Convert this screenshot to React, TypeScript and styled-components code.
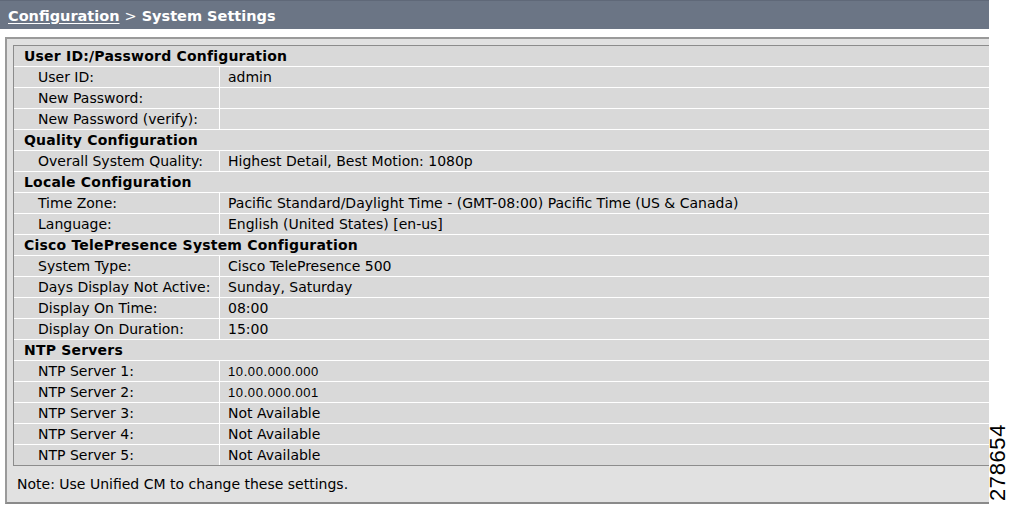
import React from "react";
import styled, { createGlobalStyle } from "styled-components";

const Global = createGlobalStyle`
  html, body { margin: 0; padding: 0; background: #ffffff; }
  body { font-family: "DejaVu Sans", Verdana, sans-serif; color: #000; }
`;

const Page = styled.div`
  display: flex;
  width: 1009px;
  height: 506px;
  overflow: hidden;
`;

const Main = styled.div`
  width: 989px;
  flex-shrink: 0;
  display: flex;
  flex-direction: column;
`;

const TitleBar = styled.div`
  height: 29px;
  background: #6b7585;
  border-top: 1px solid #5f6878;
  box-sizing: border-box;
  display: flex;
  align-items: center;
  padding: 2px 0 0 8px;
  color: #ffffff;
  font-weight: bold;
  font-size: 14.5px;
`;

const Crumb = styled.a`
  color: #ffffff;
  text-decoration: underline;
  text-underline-offset: 2px;
`;

const Sep = styled.span`
  font-weight: normal;
  margin: 0 5px;
`;

const Panel = styled.div`
  margin: 8px 0 0 5px;
  border-left: 2px solid #9a9a9a;
  border-top: 2px solid #9a9a9a;
  border-bottom: 2px solid #8a8a8a;
  background: #e1e1e1;
  padding: 6px 0 0 6px;
  display: flex;
  flex-direction: column;
`;

const Table = styled.div`
  border-left: 1px solid #8c8c8c;
  border-top: 1px solid #8c8c8c;
  border-bottom: 1px solid #8c8c8c;
  background: #ffffff;
  display: flex;
  flex-direction: column;
  gap: 1px;
`;

const Heading = styled.div`
  height: 20px;
  background: #d9d9d9;
  display: flex;
  align-items: center;
  padding-left: 10px;
  font-weight: bold;
  font-size: 14px;
  letter-spacing: 0.2px;
`;

const Row = styled.div`
  height: 20px;
  display: grid;
  grid-template-columns: 205px 1fr;
  column-gap: 1px;
  font-size: 14px;
`;

const Cell = styled.div<{ $indent: number; $ip?: boolean }>`
  background: #d9d9d9;
  display: flex;
  align-items: center;
  padding-left: ${(p) => p.$indent}px;
  white-space: nowrap;
  ${(p) =>
    p.$ip &&
    `font-family: "Liberation Sans", Arial, sans-serif; letter-spacing: 0.6px; font-size: 13px;`}
`;

const Note = styled.div`
  height: 36px;
  display: flex;
  align-items: center;
  padding-left: 4px;
  font-size: 14px;
`;

const Side = styled.div`
  width: 20px;
  box-sizing: border-box;
  display: flex;
  align-items: flex-end;
  justify-content: flex-start;
  padding: 0 0 5px 0;
`;

const FigNum = styled.div`
  writing-mode: vertical-rl;
  transform: rotate(180deg);
  font-family: "Liberation Sans", Arial, sans-serif;
  font-size: 22px;
  letter-spacing: 0.6px;
  line-height: 18px;
  width: 18px;
`;

type Item = { label: string; value: string; ip?: boolean };
type Section = { title: string; items: Item[] };

const sections: Section[] = [
  {
    title: "User ID:/Password Configuration",
    items: [
      { label: "User ID:", value: "admin" },
      { label: "New Password:", value: "" },
      { label: "New Password (verify):", value: "" },
    ],
  },
  {
    title: "Quality Configuration",
    items: [{ label: "Overall System Quality:", value: "Highest Detail, Best Motion: 1080p" }],
  },
  {
    title: "Locale Configuration",
    items: [
      { label: "Time Zone:", value: "Pacific Standard/Daylight Time - (GMT-08:00) Pacific Time (US & Canada)" },
      { label: "Language:", value: "English (United States) [en-us]" },
    ],
  },
  {
    title: "Cisco TelePresence System Configuration",
    items: [
      { label: "System Type:", value: "Cisco TelePresence 500" },
      { label: "Days Display Not Active:", value: "Sunday, Saturday" },
      { label: "Display On Time:", value: "08:00" },
      { label: "Display On Duration:", value: "15:00" },
    ],
  },
  {
    title: "NTP Servers",
    items: [
      { label: "NTP Server 1:", value: "10.00.000.000", ip: true },
      { label: "NTP Server 2:", value: "10.00.000.001", ip: true },
      { label: "NTP Server 3:", value: "Not Available" },
      { label: "NTP Server 4:", value: "Not Available" },
      { label: "NTP Server 5:", value: "Not Available" },
    ],
  },
];

const App = () => {
  return (
    <>
      <Global />
      <Page>
        <Main>
          <TitleBar>
            <Crumb>Configuration</Crumb>
            <Sep>&gt;</Sep>
            System Settings
          </TitleBar>
          <Panel>
            <Table>
              {sections.map((s) => (
                <React.Fragment key={s.title}>
                  <Heading>{s.title}</Heading>
                  {s.items.map((it) => (
                    <Row key={it.label}>
                      <Cell $indent={24}>{it.label}</Cell>
                      <Cell $indent={8} $ip={it.ip}>{it.value}</Cell>
                    </Row>
                  ))}
                </React.Fragment>
              ))}
            </Table>
            <Note>Note: Use Unified CM to change these settings.</Note>
          </Panel>
        </Main>
        <Side>
          <FigNum>278654</FigNum>
        </Side>
      </Page>
    </>
  );
};

export default App;
